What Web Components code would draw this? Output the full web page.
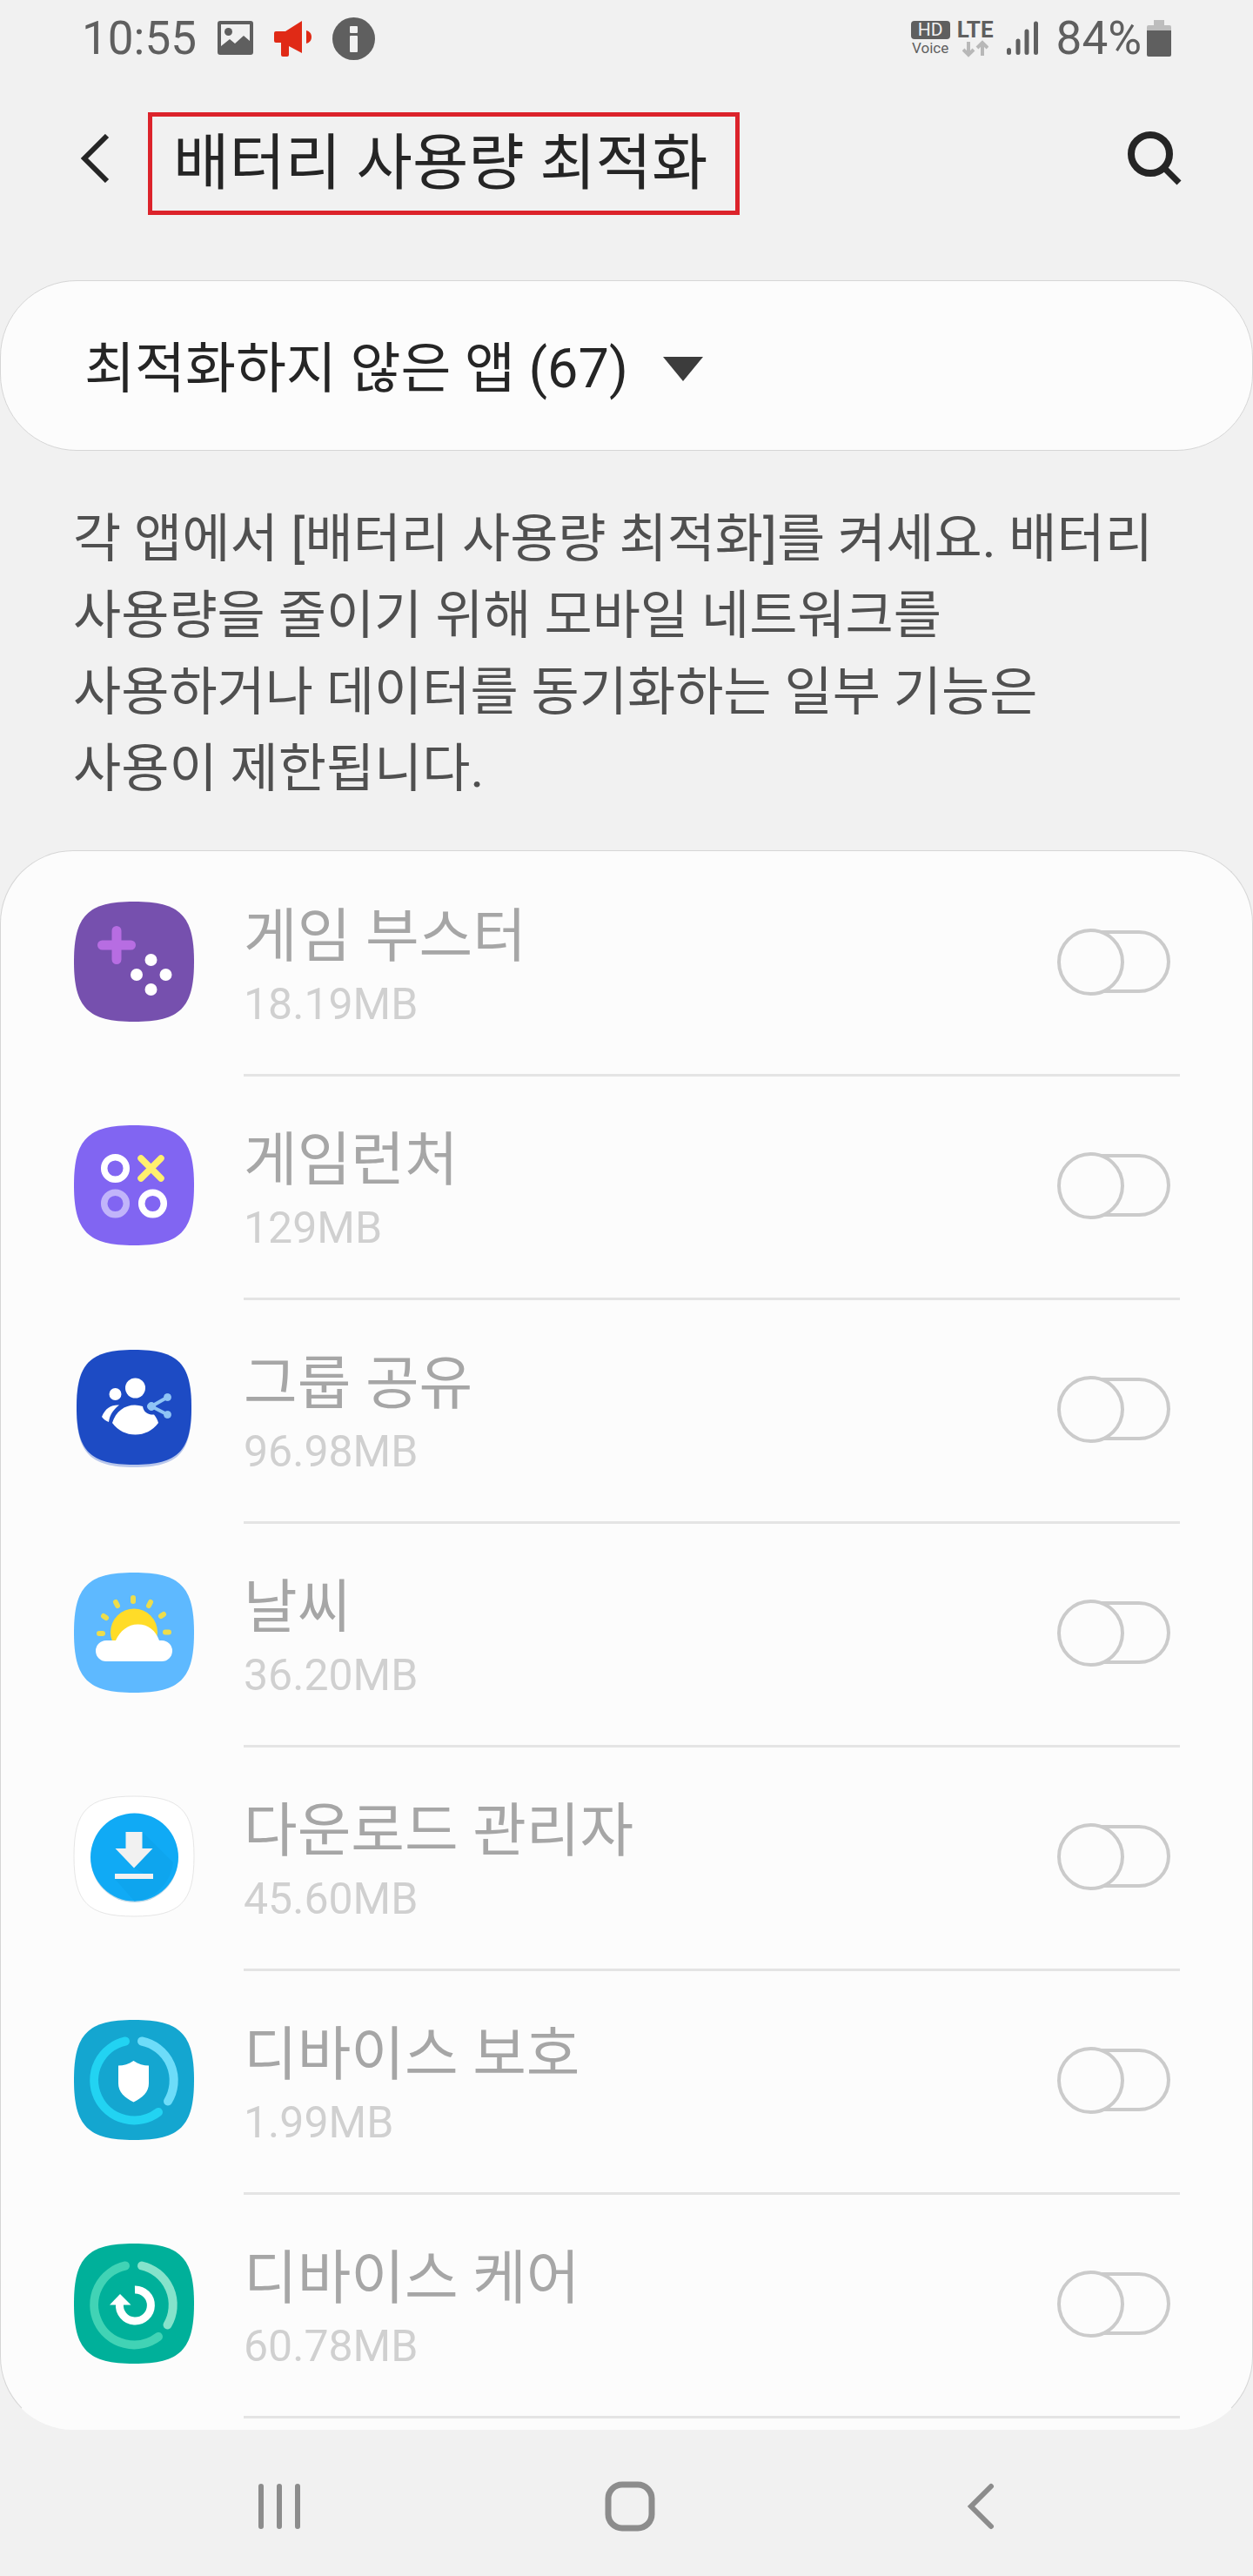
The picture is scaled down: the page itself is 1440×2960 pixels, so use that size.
<!DOCTYPE html>
<html lang="ko">
<head>
<meta charset="UTF-8">
<meta name="viewport" content="width=device-width, initial-scale=1">
<title>배터리 사용량 최적화</title>
<style>
  body {
    margin: 0;
    background: #f1f1f1;
    color: #252525;
    font-family: Roboto, "Noto Sans CJK KR", sans-serif;
  }
</style>
</head>
<body>

<battery-screen>
  <status-bar slot="status" time="10:55" battery="84%"></status-bar>
  <title-bar slot="title">배터리 사용량 최적화</title-bar>
  <app-filter slot="filter" label="최적화하지 않은 앱 (67)"></app-filter>
  <span slot="description">각 앱에서 [배터리 사용량 최적화]를 켜세요. 배터리 사용량을 줄이기 위해 모바일 네트워크를 사용하거나 데이터를 동기화하는 일부 기능은 사용이 제한됩니다.</span>

  <app-row icon="booster"><span slot="name">게임 부스터</span><span slot="size">18.19MB</span></app-row>
  <app-row icon="launcher"><span slot="name">게임런처</span><span slot="size">129MB</span></app-row>
  <app-row icon="share"><span slot="name">그룹 공유</span><span slot="size">96.98MB</span></app-row>
  <app-row icon="weather"><span slot="name">날씨</span><span slot="size">36.20MB</span></app-row>
  <app-row icon="download"><span slot="name">다운로드 관리자</span><span slot="size">45.60MB</span></app-row>
  <app-row icon="security"><span slot="name">디바이스 보호</span><span slot="size">1.99MB</span></app-row>
  <app-row icon="care"><span slot="name">디바이스 케어</span><span slot="size">60.78MB</span></app-row>

  <nav-bar slot="nav"></nav-bar>
</battery-screen>

<script>
// Base: cada componente define su plantilla y se clona en el shadow root
class BaseElement extends HTMLElement {
  constructor() {
    super();
    this.attachShadow({ mode: "open" });
    const template = document.createElement("template");
    template.innerHTML = this.markup;
    this.shadowRoot.appendChild(template.content.cloneNode(true));
  }
}

// Pantalla completa
class BatteryScreen extends BaseElement {
  get markup() {
    return `
      <style>
        :host {
          display: flex;
          flex-direction: column;
          min-height: 100vh;
        }
        main {
          flex: 1;
        }
        .description {
          margin: 0;
          padding: 58px 84px 49px;
          color: #505050;
          font-size: 60px;
          line-height: 88px;
          word-break: keep-all;
        }
        .list {
          padding: 2px 0 12px;
          background: #fcfcfc;
          border: 1px solid #d6d6d6;
          border-bottom-color: #fcfcfc;
          border-radius: 84px;
        }
      </style>
      <slot name="status"></slot>
      <slot name="title"></slot>
      <main>
        <slot name="filter"></slot>
        <p class="description"><slot name="description"></slot></p>
        <section class="list"><slot></slot></section>
      </main>
      <slot name="nav"></slot>
    `;
  }
}
customElements.define("battery-screen", BatteryScreen);

// Barra de estado
class StatusBar extends BaseElement {
  get markup() {
    return `
      <style>
        :host {
          display: flex;
          justify-content: space-between;
          align-items: center;
          height: 88px;
          padding: 0 94px;
          color: #5f5f5f;
          font-size: 53px;
          line-height: 64px;
        }
        .side { display: flex; align-items: center; }
        .left { gap: 24px; }
        .right { gap: 8px; }
        svg { display: block; }
        .stack {
          display: flex;
          flex-direction: column;
          align-items: center;
        }
        .hd {
          width: 45px;
          border-radius: 4px;
          background: #5f5f5f;
          color: #f1f1f1;
          font-size: 21px;
          line-height: 21px;
          text-align: center;
        }
        .voice { font-size: 17px; line-height: 20px; }
        .lte { font-size: 26px; line-height: 23px; font-weight: 700; }
        .power { display: flex; align-items: center; gap: 6px; }
        .signal { margin: 0 13px 0 7px; }
      </style>
      <div class="side left">
        <span class="time"></span>
        <svg width="41" height="40" viewBox="0 0 41 40">
          <path fill="#5f5f5f" fill-rule="evenodd" d="M3 0H38a3 3 0 0 1 3 3V36a3 3 0 0 1-3 3H3a3 3 0 0 1-3-3V3a3 3 0 0 1 3-3zM4 4V29L14 21L20 26L30 17L37 23V4z"/>
          <circle cx="12.5" cy="12.5" r="4.5" fill="#5f5f5f"/>
        </svg>
        <svg width="43" height="41" viewBox="0 0 43 41" fill="#e02a16">
          <path d="M2 12H13L32 0V37L17 29V39a2 2 0 0 1-2 2H10a2 2 0 0 1-2-2V25H2a2 2 0 0 1-2-2V14a2 2 0 0 1 2-2z"/>
          <path d="M37 11C41 12 43 15 43 18.5S41 25 37 26z"/>
        </svg>
        <svg width="49" height="49" viewBox="0 0 49 49">
          <circle cx="24.5" cy="24.5" r="24.5" fill="#5f5f5f"/>
          <rect x="20" y="10" width="9" height="8" rx="1" fill="#f1f1f1"/>
          <rect x="20" y="21" width="9" height="19" rx="1" fill="#f1f1f1"/>
        </svg>
      </div>
      <div class="side right">
        <div class="stack"><span class="hd">HD</span><span class="voice">Voice</span></div>
        <div class="stack">
          <span class="lte">LTE</span>
          <svg width="30" height="20" viewBox="0 0 30 20" fill="none" stroke="#b8b8b8" stroke-width="4">
            <path d="M7 2V17M1 11L7 17L13 11M23 18V3M17 9L23 3L29 9"/>
          </svg>
        </div>
        <svg class="signal" width="36" height="40" viewBox="0 0 36 40" stroke="#5f5f5f" stroke-width="5" stroke-linecap="round">
          <path d="M2.5 33.5V36.5M13 23V36.5M23 12V36.5M33.5 3V36.5"/>
        </svg>
        <div class="power">
          <span class="battery"></span>
          <svg width="28" height="42" viewBox="0 0 28 42">
            <path fill="#bdbdbd" d="M8 0H20V6H26a2 2 0 0 1 2 2V12H0V8a2 2 0 0 1 2-2H8z"/>
            <path fill="#5f5f5f" d="M0 12H28V40a2 2 0 0 1-2 2H2a2 2 0 0 1-2-2z"/>
          </svg>
        </div>
      </div>
    `;
  }

  connectedCallback() {
    this.shadowRoot.querySelector(".time").textContent = this.getAttribute("time");
    this.shadowRoot.querySelector(".battery").textContent = this.getAttribute("battery");
  }
}
customElements.define("status-bar", StatusBar);

// Cabecera con botón de volver, título enmarcado y búsqueda
class TitleBar extends BaseElement {
  get markup() {
    return `
      <style>
        :host {
          display: flex;
          align-items: center;
          padding: 41px 76px 75px 86px;
        }
        button {
          padding: 0 6px 12px;
          border: none;
          background: none;
          cursor: pointer;
        }
        svg { display: block; }
        h1 {
          margin: 0 auto 0 38px;
          padding: 14px 32px 14px 24px;
          border: 5px solid #dc232b;
          font-size: 70px;
          line-height: 80px;
          font-weight: 400;
        }
      </style>
      <button type="button" aria-label="뒤로">
        <svg width="34" height="56" viewBox="0 0 34 56" fill="none" stroke="#252525" stroke-width="6">
          <path d="M31 2L5 28L31 54"/>
        </svg>
      </button>
      <h1><slot></slot></h1>
      <button type="button" aria-label="검색">
        <svg width="62" height="62" viewBox="0 0 62 62" fill="none" stroke="#252525">
          <circle cx="26" cy="26" r="22" stroke-width="8"/>
          <path d="M42 42L59 59" stroke-width="7"/>
        </svg>
      </button>
    `;
  }
}
customElements.define("title-bar", TitleBar);

// Desplegable para filtrar las aplicaciones
class AppFilter extends BaseElement {
  get markup() {
    return `
      <style>
        :host {
          display: flex;
          align-items: center;
          gap: 40px;
          padding: 61px 96px 53px;
          background: #fcfcfc;
          border: 1px solid #d6d6d6;
          border-radius: 88px;
        }
        select {
          appearance: none;
          margin: 0;
          padding: 0;
          border: none;
          background: none;
          color: inherit;
          font: inherit;
          font-size: 63px;
          line-height: 80px;
        }
        svg { display: block; pointer-events: none; }
      </style>
      <select aria-label="앱 필터"><option></option></select>
      <svg width="46" height="28" viewBox="0 0 46 28"><path fill="#3c3c3c" d="M0 0H46L23 28z"/></svg>
    `;
  }

  connectedCallback() {
    this.shadowRoot.querySelector("option").textContent = this.getAttribute("label");
  }
}
customElements.define("app-filter", AppFilter);

// Iconos de aplicaciones, dibujados en una caja de 138x138
const SQUIRCLE = "M69 0C122 0 138 16 138 69S122 138 69 138S0 122 0 69S16 0 69 0z";

const ICONS = {
  booster: `
    <path fill="#7650ae" d="${SQUIRCLE}"/>
    <path stroke="#b76de2" stroke-width="11" stroke-linecap="round" d="M49 33.5V66.5M32.5 50H65.5"/>
    <g fill="#fff">
      <circle cx="88.5" cy="67" r="7"/><circle cx="72" cy="84" r="7"/>
      <circle cx="105.5" cy="84" r="7"/><circle cx="88.5" cy="101" r="7"/>
    </g>`,
  launcher: `
    <path fill="#8165f2" d="${SQUIRCLE}"/>
    <g fill="none" stroke="#fff" stroke-width="7.5">
      <circle cx="47.5" cy="49.5" r="12.8"/>
      <circle cx="90.5" cy="90" r="12.8"/>
      <circle cx="47.5" cy="90" r="12.8" stroke="#c1b4fa"/>
      <path stroke="#fff06e" stroke-linecap="round" d="M77 38L100 61M100 38L77 61"/>
    </g>`,
  share: `
    <path fill="#1d4bc4" fill-opacity=".3" d="M69 4C120 4 135 19 135 69S120 136 69 136S3 119 3 69S18 4 69 4z"/>
    <path fill="#1d4bc4" d="M69 1C120 1 135 17 135 67S120 133 69 133S3 117 3 67S18 1 69 1z"/>
    <g fill="#fff">
      <circle cx="70.5" cy="45" r="11.5"/>
      <circle cx="47.5" cy="52" r="7"/>
      <path d="M44 85C48 72 58 64.5 70 64.5C73 64.5 76 65 79 66C80 73 86 76 92 75.5C94 78 96 81 97 85C90 94 81 98.5 70.5 98.5S51 94 44 85z"/>
      <path d="M32 78C36 68 43 64 52 64.5C45 70 41 76 40 84C37 83 34 81 32 78z"/>
    </g>
    <g fill="#8fc4f5" stroke="#8fc4f5">
      <path fill="none" stroke-width="4" d="M107.5 55.5L89 66L107.5 75.5"/>
      <circle cx="89" cy="66" r="4.5"/><circle cx="107.5" cy="55.5" r="4"/><circle cx="107.5" cy="75.5" r="4"/>
    </g>`,
  weather: `
    <path fill="#5eb9ff" d="${SQUIRCLE}"/>
    <path stroke="#eddd4c" stroke-width="6" stroke-linecap="round" d="M68 29V33M48 34L50 38M88 34L86 38M34 50L37 52M103 48L100 50M29 70H33M105 68.5H109"/>
    <circle cx="69" cy="68.5" r="27" fill="#ffdc28"/>
    <path fill="#fff" d="M37 78H48C53 67 62 59.5 73.5 59.5C86 59.5 94 67 98 78H101a12 12 0 0 1 0 24H37a12 12 0 0 1 0-24z"/>`,
  download: `
    <path fill="#fff" stroke="#e6e6e6" d="${SQUIRCLE}"/>
    <circle cx="69.5" cy="72" r="50" fill="#b9d6e6"/>
    <circle cx="69.5" cy="70" r="50.5" fill="#10aaf5"/>
    <path fill="#0ea5ee" d="M78.5 41L114 76A50 50 0 0 1 69.5 120.5L47 95H91L69 82.5L90.5 60H78.5z"/>
    <path fill="#f1f1f1" d="M59.5 41H78.5V60H90.5L69 82.5L47.5 60H59.5zM47 89H91V95H47z"/>`,
  security: `
    <path fill="#14a6d0" d="${SQUIRCLE}"/>
    <g fill="none" stroke-width="10" stroke-linecap="round">
      <path stroke="#22d3f2" d="M59 24.5A46 46 0 1 0 97 106"/>
      <path stroke="#6ddcf9" d="M78 24.5A46 46 0 0 1 108 93.5"/>
    </g>
    <path fill="#fff" d="M68.5 47C63 51 57 52.5 51 52.5V73C51 83 58 89 68.5 94.5C79 89 86 83 86 73V52.5C80 52.5 74 51 68.5 47z"/>`,
  care: `
    <path fill="#00b09a" d="${SQUIRCLE}"/>
    <g fill="none" stroke-width="10" stroke-linecap="round">
      <path stroke="#41d3b5" d="M59 25.5A46 46 0 1 0 97 107"/>
      <path stroke="#85e3cb" d="M78 25.5A46 46 0 0 1 107.5 93.5"/>
    </g>
    <path fill="none" stroke="#fff" stroke-width="9" d="M70 53A18 18 0 1 1 52.5 69"/>
    <path fill="#fff" d="M41 70.5L53 58L65.5 70.5z"/>`
};

// Fila de aplicación: icono, nombre, tamaño e interruptor
class AppRow extends BaseElement {
  get markup() {
    return `
      <style>
        :host {
          display: flex;
          align-items: stretch;
          gap: 57px;
          padding: 0 83px 0 84px;
        }
        .icon {
          display: block;
          flex: none;
          width: 138px;
          height: 138px;
          margin-top: 56px;
          overflow: visible;
        }
        .body {
          flex: 1;
          display: flex;
          align-items: center;
          justify-content: space-between;
          padding: 47px 11px 51px 0;
          border-bottom: 3px solid #e4e4e4;
        }
        label {
          display: flex;
          flex-direction: column;
        }
        .name { color: #a6a6a6; font-size: 67px; line-height: 98px; }
        .size { color: #d0d0d0; font-size: 50px; line-height: 58px; }
        input {
          appearance: none;
          display: grid;
          align-items: center;
          flex: none;
          width: 130px;
          height: 77px;
          margin: 0;
        }
        input::before, input::after {
          content: "";
          box-sizing: border-box;
          grid-area: 1 / 1;
          border: 4px solid #cbcbcb;
          background: #fcfcfc;
        }
        input::before { height: 72px; margin-left: 5px; border-radius: 36px; }
        input::after { width: 77px; height: 77px; border-radius: 50%; }
        input:checked::after { justify-self: end; }
      </style>
      <svg class="icon" viewBox="0 0 138 138" aria-hidden="true"></svg>
      <div class="body">
        <label for="toggle">
          <span class="name"><slot name="name"></slot></span>
          <span class="size"><slot name="size"></slot></span>
        </label>
        <input type="checkbox" role="switch" id="toggle" disabled>
      </div>
    `;
  }

  connectedCallback() {
    this.shadowRoot.querySelector(".icon").innerHTML = ICONS[this.getAttribute("icon")];
  }
}
customElements.define("app-row", AppRow);

// Barra de navegación inferior
class NavBar extends BaseElement {
  get markup() {
    return `
      <style>
        :host {
          display: flex;
          height: 160px;
          padding: 8px 112px 0 120px;
        }
        button {
          flex: 1;
          display: flex;
          align-items: center;
          justify-content: center;
          padding: 0;
          border: none;
          background: none;
          cursor: pointer;
        }
        svg { fill: none; stroke: #8c8c8c; stroke-linecap: round; }
      </style>
      <button type="button" aria-label="최근 앱">
        <svg width="50" height="54" viewBox="0 0 50 54" stroke-width="6"><path d="M4 4V50M25 4V50M46 4V50"/></svg>
      </button>
      <button type="button" aria-label="홈">
        <svg width="58" height="58" viewBox="0 0 58 58" stroke-width="7"><rect x="4" y="4" width="50" height="50" rx="16"/></svg>
      </button>
      <button type="button" aria-label="뒤로">
        <svg width="32" height="54" viewBox="0 0 32 54" stroke-width="6"><path d="M28 4L5 27L28 50"/></svg>
      </button>
    `;
  }
}
customElements.define("nav-bar", NavBar);
</script>
</body>
</html>
